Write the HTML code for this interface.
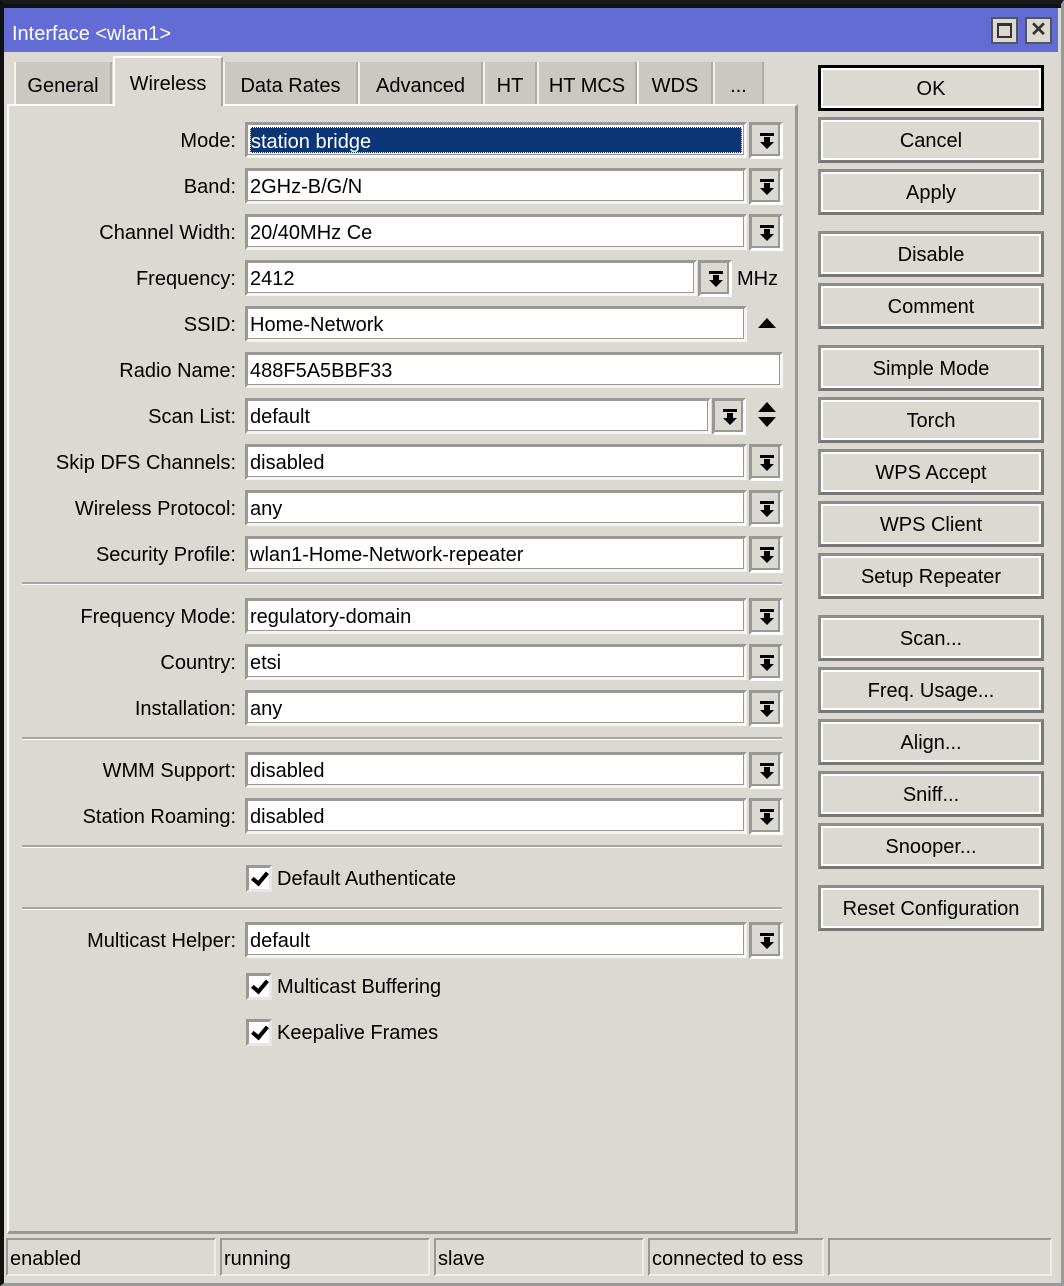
<!DOCTYPE html>
<html><head><meta charset="utf-8"><style>
*{margin:0;padding:0;box-sizing:border-box}
body{width:1064px;height:1286px;background:#dcd9d3;font-family:"Liberation Sans",sans-serif;font-size:20px;color:#000;position:relative;overflow:hidden}
.a{position:absolute}
#frame{left:0;top:0;width:1064px;height:1286px;border-top:4px solid #1a1a1a;border-left:4px solid #111;border-right:3px solid #999;border-bottom:3px solid #999;box-shadow:inset 0 4px 0 #111}
#title{left:4px;top:8px;width:1054px;height:44px;background:#636bd4;color:#fff;line-height:52px;padding-left:8px}
.wb{top:17px;width:27px;height:27px;background:#dcd9d3;border:2px solid #555;}
.tab{top:62px;height:43px;background:#cbc8c1;border-left:2px solid #f4f3f0;border-right:2px solid #b0ada7;text-align:center;line-height:48px}
.tab.on{top:56px;height:50px;background:#dcd9d3;line-height:52px;border-top:2px solid #fff;border-left:2px solid #fff;border-right:2px solid #a8a5a0;z-index:2}
#panel{left:7px;top:104px;width:791px;height:1130px;border-top:2px solid #fff;border-left:2px solid #fff;border-right:3px solid #9a9894;border-bottom:3px solid #9a9894}
.lbl{width:236px;left:0;text-align:right;height:34px;line-height:37px}
.fld{height:36px;background:#fff;border:3px solid #9a9894;border-right-color:#f6f5f3;border-bottom-color:#f6f5f3;box-shadow:inset -1px -1px 0 #9a9894;line-height:33px;padding-left:2px;white-space:nowrap}
.btn{width:34px;height:37px;border:3px solid #9a9894;border-right-color:#fff;border-bottom-color:#fff;box-shadow:inset -2px -2px 0 #9a9894}
.btn::after{content:"";position:absolute;left:8px;top:8px;width:14px;height:3px;background:#000}
.btn::before{content:"";position:absolute;left:8px;top:17px;border-left:7px solid transparent;border-right:7px solid transparent;border-top:7px solid #000}
.btn i{position:absolute;left:12px;top:12px;width:6px;height:6px;background:#000}
.sep{left:22px;width:760px;height:3px;border-top:2px solid #a8a5a0;border-bottom:1px solid #fff}
.cb{left:246px;width:26px;height:27px;background:#fff;border:3px solid #9a9894;border-right-color:#e8e7e4;border-bottom-color:#e8e7e4}
.cb::after{content:"";position:absolute;left:6px;top:1px;width:6px;height:12px;border-right:4px solid #000;border-bottom:4px solid #000;transform:rotate(40deg)}
.rb{left:818px;width:226px;height:46px;border:3px solid #8e8c88;border-right-color:#777;border-bottom-color:#777;text-align:center;line-height:42px;outline:2px solid #fff;outline-offset:-5px}
.st{top:1238px;height:38px;border:2px solid #9a9894;border-right-color:#f0efec;border-bottom-color:#f0efec;line-height:38px;padding-left:2px}
</style></head><body>
<div class="a" id="frame"></div>
<div class="a" id="title">Interface &lt;wlan1&gt;</div>
<div class="a wb" style="left:991px"><div class="a" style="left:4px;top:4px;width:15px;height:15px;border:2px solid #333;border-top-width:3px"></div></div>
<div class="a wb" style="left:1025px;font-weight:bold;font-size:20px;line-height:22px;text-align:center;color:#333">✕</div>

<div class="a tab" style="left:14px;width:98px">General</div>
<div class="a tab on" style="left:113px;width:110px">Wireless</div>
<div class="a tab" style="left:223px;width:135px">Data Rates</div>
<div class="a tab" style="left:358px;width:125px">Advanced</div>
<div class="a tab" style="left:483px;width:54px">HT</div>
<div class="a tab" style="left:537px;width:100px">HT MCS</div>
<div class="a tab" style="left:637px;width:76px">WDS</div>
<div class="a tab" style="left:713px;width:51px">...</div>

<div class="a" id="panel"></div>

<div class="a lbl" style="top:123px">Mode:</div><div class="a fld" style="left:245px;top:122px;width:502px;padding:2px"><div style="background:#0c3578;color:#fff;height:26px;line-height:28px;border:1px dotted #fff">station bridge</div></div><div class="a btn" style="left:749px;top:122px"><i></i></div>
<div class="a lbl" style="top:169px">Band:</div><div class="a fld" style="left:245px;top:168px;width:502px">2GHz-B/G/N</div><div class="a btn" style="left:749px;top:168px"><i></i></div>
<div class="a lbl" style="top:215px">Channel Width:</div><div class="a fld" style="left:245px;top:214px;width:502px">20/40MHz Ce</div><div class="a btn" style="left:749px;top:214px"><i></i></div>
<div class="a lbl" style="top:261px">Frequency:</div><div class="a fld" style="left:245px;top:260px;width:452px">2412</div><div class="a btn" style="left:698px;top:260px"><i></i></div><div class="a" style="left:737px;top:261px;line-height:37px">MHz</div>
<div class="a lbl" style="top:307px">SSID:</div><div class="a fld" style="left:245px;top:306px;width:502px">Home-Network</div><div class="a" style="left:758px;top:318px;border-left:9px solid transparent;border-right:9px solid transparent;border-bottom:10px solid #000"></div>
<div class="a lbl" style="top:353px">Radio Name:</div><div class="a fld" style="left:245px;top:352px;width:538px">488F5A5BBF33</div>
<div class="a lbl" style="top:399px">Scan List:</div><div class="a fld" style="left:245px;top:398px;width:466px">default</div><div class="a btn" style="left:712px;top:398px"><i></i></div><div class="a" style="left:758px;top:402px;border-left:9px solid transparent;border-right:9px solid transparent;border-bottom:10px solid #000"></div><div class="a" style="left:758px;top:417px;border-left:9px solid transparent;border-right:9px solid transparent;border-top:10px solid #000"></div>
<div class="a lbl" style="top:445px">Skip DFS Channels:</div><div class="a fld" style="left:245px;top:444px;width:502px">disabled</div><div class="a btn" style="left:749px;top:444px"><i></i></div>
<div class="a lbl" style="top:491px">Wireless Protocol:</div><div class="a fld" style="left:245px;top:490px;width:502px">any</div><div class="a btn" style="left:749px;top:490px"><i></i></div>
<div class="a lbl" style="top:537px">Security Profile:</div><div class="a fld" style="left:245px;top:536px;width:502px">wlan1-Home-Network-repeater</div><div class="a btn" style="left:749px;top:536px"><i></i></div>
<div class="a sep" style="top:582px"></div>
<div class="a lbl" style="top:599px">Frequency Mode:</div><div class="a fld" style="left:245px;top:598px;width:502px">regulatory-domain</div><div class="a btn" style="left:749px;top:598px"><i></i></div>
<div class="a lbl" style="top:645px">Country:</div><div class="a fld" style="left:245px;top:644px;width:502px">etsi</div><div class="a btn" style="left:749px;top:644px"><i></i></div>
<div class="a lbl" style="top:691px">Installation:</div><div class="a fld" style="left:245px;top:690px;width:502px">any</div><div class="a btn" style="left:749px;top:690px"><i></i></div>
<div class="a sep" style="top:737px"></div>
<div class="a lbl" style="top:753px">WMM Support:</div><div class="a fld" style="left:245px;top:752px;width:502px">disabled</div><div class="a btn" style="left:749px;top:752px"><i></i></div>
<div class="a lbl" style="top:799px">Station Roaming:</div><div class="a fld" style="left:245px;top:798px;width:502px">disabled</div><div class="a btn" style="left:749px;top:798px"><i></i></div>
<div class="a sep" style="top:845px"></div>
<div class="a cb" style="top:865px"></div><div class="a" style="left:277px;top:861px;line-height:37px">Default Authenticate</div>
<div class="a sep" style="top:907px"></div>
<div class="a lbl" style="top:923px">Multicast Helper:</div><div class="a fld" style="left:245px;top:922px;width:502px">default</div><div class="a btn" style="left:749px;top:922px"><i></i></div>
<div class="a cb" style="top:973px"></div><div class="a" style="left:277px;top:969px;line-height:37px">Multicast Buffering</div>
<div class="a cb" style="top:1019px"></div><div class="a" style="left:277px;top:1015px;line-height:37px">Keepalive Frames</div>

<div class="a rb" style="top:65px;border-color:#000">OK</div>
<div class="a rb" style="top:117px">Cancel</div>
<div class="a rb" style="top:169px">Apply</div>
<div class="a rb" style="top:231px">Disable</div>
<div class="a rb" style="top:283px">Comment</div>
<div class="a rb" style="top:345px">Simple Mode</div>
<div class="a rb" style="top:397px">Torch</div>
<div class="a rb" style="top:449px">WPS Accept</div>
<div class="a rb" style="top:501px">WPS Client</div>
<div class="a rb" style="top:553px">Setup Repeater</div>
<div class="a rb" style="top:615px">Scan...</div>
<div class="a rb" style="top:667px">Freq. Usage...</div>
<div class="a rb" style="top:719px">Align...</div>
<div class="a rb" style="top:771px">Sniff...</div>
<div class="a rb" style="top:823px">Snooper...</div>
<div class="a rb" style="top:885px">Reset Configuration</div>

<div class="a st" style="left:6px;width:210px">enabled</div>
<div class="a st" style="left:220px;width:210px">running</div>
<div class="a st" style="left:434px;width:210px">slave</div>
<div class="a st" style="left:648px;width:176px">connected to ess</div>
<div class="a st" style="left:828px;width:224px"></div>
</body></html>
